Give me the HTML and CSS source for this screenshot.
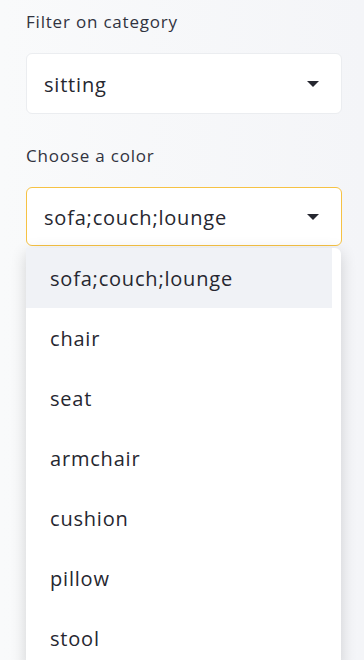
FILE: index.html
```html
<!DOCTYPE html>
<html lang="en">

<head>
  <meta charset="UTF-8" />
  <title>Filters</title>
  <meta name="viewport" content="width=device-width, initial-scale=1.0" />
  <link rel="stylesheet" href="styles.css">
</head>

<body>
  <div class="sidebar">
    <div class="field">
      <label class="field-label">Filter on category</label>
      <div class="select">
        <span class="select-value">sitting</span>
        <svg class="caret" width="12" height="8" viewBox="0 0 12 8"><path d="M0 1h12L6 7z" fill="#262730"/></svg>
      </div>
    </div>
    <div class="field">
      <label class="field-label">Choose a color</label>
      <div class="select select-open">
        <span class="select-value">sofa;couch;lounge</span>
        <svg class="caret" width="12" height="8" viewBox="0 0 12 8"><path d="M0 1h12L6 7z" fill="#262730"/></svg>
      </div>
      <ul class="menu">
        <li class="menu-item active">sofa;couch;lounge</li>
        <li class="menu-item">chair</li>
        <li class="menu-item">seat</li>
        <li class="menu-item">armchair</li>
        <li class="menu-item">cushion</li>
        <li class="menu-item">pillow</li>
        <li class="menu-item">stool</li>
      </ul>
    </div>
  </div>
</body>

</html>
```

FILE: styles.css
```css
* {
  box-sizing: border-box;
}

html,
body {
  margin: 0;
  padding: 0;
  height: 100%;
  overflow: hidden;
}

body {
  font-family: 'Open Sans', sans-serif;
  color: #31333f;
  background: linear-gradient(to right, #f9fafb, #f4f5f8);
}

.sidebar {
  padding: 10px 22px 0 26px;
}

.field-label {
  display: block;
  font-size: 17px;
  line-height: 24px;
  letter-spacing: 0.8px;
  color: #31333f;
  margin-bottom: 19px;
}

.field {
  margin-bottom: 30px;
}

.select {
  display: flex;
  align-items: center;
  justify-content: space-between;
  height: 61px;
  padding: 1px 22px 0 17px;
  background: white;
  border: 1px solid #ebedf0;
  border-radius: 6px;
  font-size: 20px;
  letter-spacing: 0.8px;
  color: #262730;
}

.select-open {
  border-color: #f6c244;
  height: 59px;
}

.menu {
  list-style: none;
  margin: 2px 1px 0 0;
  padding: 0 9px 0 0;
  background: white;
  border-radius: 6px 6px 0 0;
  box-shadow: 0 4px 16px rgba(0, 0, 0, 0.16);
}

.menu-item {
  height: 60px;
  line-height: 62px;
  padding-left: 24px;
  font-size: 20px;
  letter-spacing: 0.8px;
  color: #262730;
}

.menu-item.active {
  background: #f0f2f6;
}
```
